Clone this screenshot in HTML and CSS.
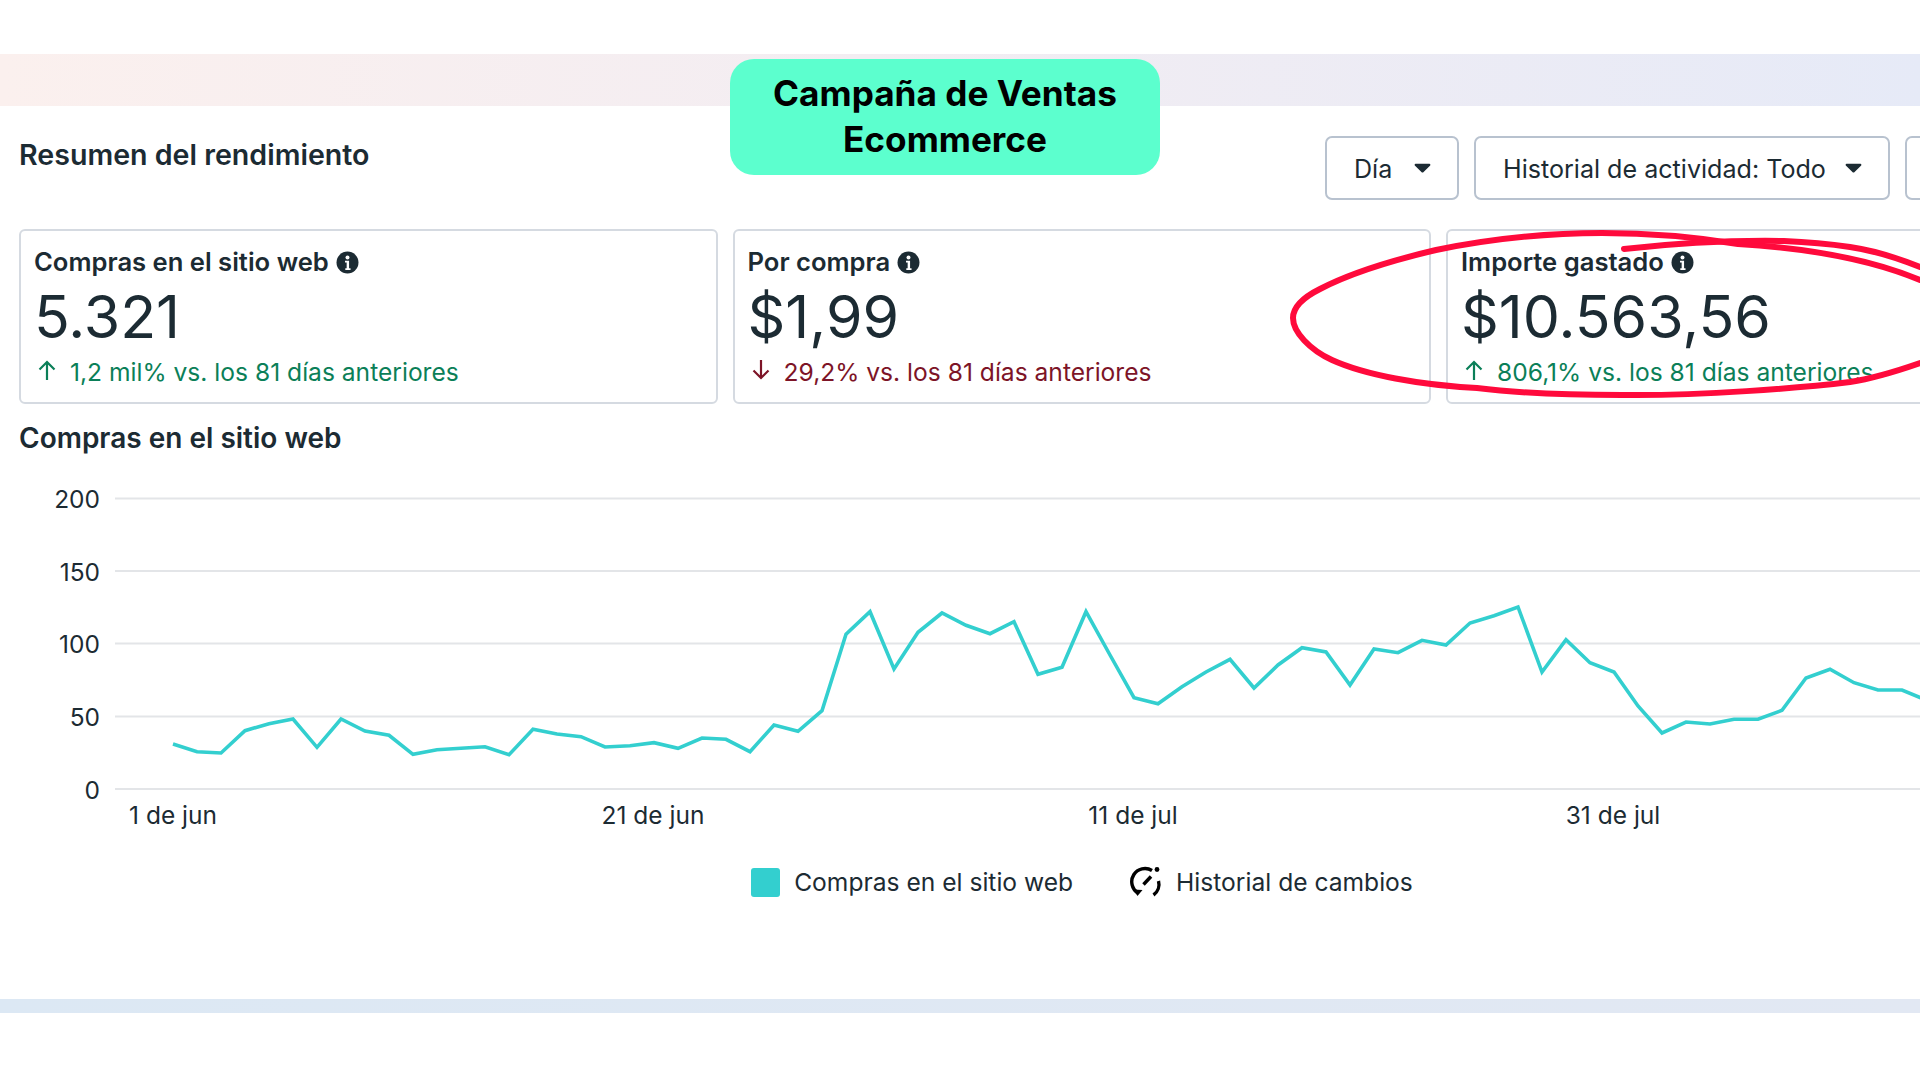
FILE: index.html
```html
<!DOCTYPE html>
<html lang="es">
<head>
  <meta charset="UTF-8">
  <title>Resumen del rendimiento</title>
  <link rel="stylesheet" href="styles.css">
</head>
<body>
  <div class="page">
    <div class="band-top"></div>

    <div class="header">
      <h2 class="page-title">Resumen del rendimiento</h2>
      <div class="filters">
        <button class="filter filter-day">Día <svg class="caret" viewBox="0 0 17 10"><path d="M1.5 0.8h14a1 1 0 0 1 .7 1.6l-6.6 6.6a1.5 1.5 0 0 1-2.2 0L.8 2.4A1 1 0 0 1 1.5.8z"/></svg></button>
        <button class="filter filter-history">Historial de actividad: Todo <svg class="caret" viewBox="0 0 17 10"><path d="M1.5 0.8h14a1 1 0 0 1 .7 1.6l-6.6 6.6a1.5 1.5 0 0 1-2.2 0L.8 2.4A1 1 0 0 1 1.5.8z"/></svg></button>
        <button class="filter filter-cut"></button>
      </div>
    </div>

    <div class="cards">
      <div class="card">
        <div class="card-label">Compras en el sitio web
          <svg class="info" viewBox="0 0 22 22"><circle cx="11" cy="11" r="10.5"/><circle class="info-mark" cx="11" cy="6.2" r="1.9"/><path class="info-mark" d="M8.6 9.3h3.9v7.2h1.4v1.6H8.9v-1.6h1.3v-5.6H8.6z"/></svg>
        </div>
        <div class="card-value">5.321</div>
        <div class="card-delta up">
          <svg class="arrow" viewBox="0 0 18 20"><path d="M9 20V2M1.5 9.5 9 2l7.5 7.5"/></svg>
          1,2 mil% vs. los 81 días anteriores
        </div>
      </div>
      <div class="card">
        <div class="card-label">Por compra
          <svg class="info" viewBox="0 0 22 22"><circle cx="11" cy="11" r="10.5"/><circle class="info-mark" cx="11" cy="6.2" r="1.9"/><path class="info-mark" d="M8.6 9.3h3.9v7.2h1.4v1.6H8.9v-1.6h1.3v-5.6H8.6z"/></svg>
        </div>
        <div class="card-value">$1,99</div>
        <div class="card-delta down">
          <svg class="arrow" viewBox="0 0 18 20"><path d="M9 0v18M1.5 10.5 9 18l7.5-7.5"/></svg>
          29,2% vs. los 81 días anteriores
        </div>
      </div>
      <div class="card">
        <div class="card-label">Importe gastado
          <svg class="info" viewBox="0 0 22 22"><circle cx="11" cy="11" r="10.5"/><circle class="info-mark" cx="11" cy="6.2" r="1.9"/><path class="info-mark" d="M8.6 9.3h3.9v7.2h1.4v1.6H8.9v-1.6h1.3v-5.6H8.6z"/></svg>
        </div>
        <div class="card-value">$10.563,56</div>
        <div class="card-delta up">
          <svg class="arrow" viewBox="0 0 18 20"><path d="M9 20V2M1.5 9.5 9 2l7.5 7.5"/></svg>
          806,1% vs. los 81 días anteriores
        </div>
      </div>
    </div>

    <h3 class="chart-title">Compras en el sitio web</h3>

    <!-- el viewBox usa las coordenadas de la pagina -->
    <svg class="chart" viewBox="0 470 1920 370">
      <g class="grid">
        <line x1="115" y1="498.5" x2="1920" y2="498.5"/>
        <line x1="115" y1="571" x2="1920" y2="571"/>
        <line x1="115" y1="643.5" x2="1920" y2="643.5"/>
        <line x1="115" y1="716.5" x2="1920" y2="716.5"/>
        <line x1="115" y1="789" x2="1920" y2="789"/>
      </g>
      <g class="y-labels">
        <text x="100" y="508">200</text>
        <text x="100" y="581">150</text>
        <text x="100" y="653">100</text>
        <text x="100" y="726">50</text>
        <text x="100" y="799">0</text>
      </g>
      <g class="x-labels">
        <text x="173" y="824">1 de jun</text>
        <text x="653" y="824">21 de jun</text>
        <text x="1133" y="824">11 de jul</text>
        <text x="1613" y="824">31 de jul</text>
      </g>
      <polyline class="series" points="173,744 197,751.7 221,753 245,730.7 269,723.7 293,719 317,747.3 341,719 365,731 389,735.3 413,754.3 437,749.7 461,748.3 485,746.7 509,754.7 533,729.3 557,734 581,736.7 605,747 630,745.7 654,742.7 678,748.3 702,738 726,739.3 750,751.7 774,725 798,731.3 822,710.7 846,634.3 870,611.7 894,669 918,632.3 942,613 966,625.3 990,633.7 1014,621.7 1038,674.3 1062,667.3 1086,611.7 1110,655 1134,697.7 1158,703.7 1182,686.7 1206,672 1230,659.3 1254,688 1278,665 1302,647.7 1326,652 1350,685 1374,649 1398,652.7 1422,640.3 1446,645 1470,623 1494,615.7 1518,607 1542,672 1566,639.7 1590,662.7 1614,672 1638,706 1662,733 1686,722 1710,724 1734,719.3 1758,719.3 1782,710.3 1806,678 1830,669.3 1854,682.7 1878,690 1902,690 1926,700"/>
    </svg>

    <div class="legend">
      <div class="legend-item"><span class="swatch"></span>Compras en el sitio web</div>
      <div class="legend-item">
        <svg class="history-icon" viewBox="5 3 32 34">
          <path d="M27 8.5A13 13 0 0 0 13 31"/>
          <path d="M8.5 27.5 12.5 34l5-6z" class="fill"/>
          <path d="M33.5 19a13 13 0 0 1-5 14"/>
          <path d="M18.5 22.5 26 14.5"/>
          <circle cx="32" cy="7.5" r="2.4" class="fill"/>
        </svg>
        Historial de cambios
      </div>
    </div>

    <div class="band-bottom"></div>

    <div class="badge">Campaña de Ventas<br>Ecommerce</div>

    <svg class="scribble" viewBox="0 0 1920 1080">
      <path d="M1920 280C1860 255 1790 247 1738 244C1690 236 1650 233 1602 233C1540 233 1485 240 1436 250C1385 262 1345 276 1320 289C1302 298 1293 308 1293 318C1293 332 1310 350 1332 360C1365 375 1420 385 1477 388C1525 394 1575 395 1622 395C1700 396 1800 388 1850 382C1875 378 1897 371 1920 363"/>
      <path d="M1624 249C1660 245 1725 240 1784 241C1810 242 1830 244 1850 247C1878 251 1900 259 1920 267"/>
    </svg>
  </div>
</body>
</html>
```

FILE: styles.css
```css
* {
  box-sizing: border-box;
}

body {
  margin: 0;
  background-color: #fff;
  font-family: Inter, "Liberation Sans", sans-serif;
  color: #1c2b33;
}

.page {
  position: relative;
  width: 1920px;
  height: 1080px;
  overflow: hidden;
}

.band-top {
  height: 52px;
  margin-top: 54px;
  background: linear-gradient(90deg, #fbf0ee 0%, #f3edf2 45%, #e6eaf7 100%);
}

.header {
  display: flex;
  justify-content: space-between;
  margin-top: 30px;
  padding-left: 19px;
  height: 64px;
}

.page-title {
  margin: 0;
  font-size: 28.6px;
  font-weight: 600;
  line-height: 38px;
}

.filters {
  display: flex;
  gap: 15px;
  margin-right: -90px;
}

.filter {
  display: flex;
  align-items: center;
  justify-content: space-between;
  height: 64px;
  padding: 2px 26px 0 27px;
  background-color: #fff;
  border: 2px solid #b8c2cf;
  border-radius: 7px;
  font-family: inherit;
  font-size: 25.1px;
  color: #1c2b33;
}

.filter-day {
  width: 134px;
}

.filter-history {
  width: 416px;
}

.filter-cut {
  width: 105px;
}

.caret {
  width: 17px;
  height: 10px;
  margin-top: -2px;
  fill: #1c2b33;
}

.cards {
  display: flex;
  gap: 15px;
  margin-top: 29px;
  padding-left: 19px;
}

.card {
  flex: none;
  width: 698.5px;
  height: 175px;
  padding: 16px 0 0 13px;
  border: 2px solid #d5dae1;
  border-radius: 6px;
}

.card-label {
  display: flex;
  align-items: center;
  gap: 7px;
  font-size: 25.6px;
  font-weight: 600;
  line-height: 30px;
}

.info {
  width: 23px;
  height: 23px;
  fill: #1c2b33;
}

.info .info-mark {
  fill: #fff;
}

.card-value {
  margin-top: 6px;
  font-size: 59px;
  font-weight: 400;
  line-height: 68px;
}

.card-delta {
  display: flex;
  align-items: center;
  gap: 14px;
  margin-top: 6px;
  padding-left: 4px;
  font-size: 24.6px;
  line-height: 30px;
}

.card-delta.up {
  color: #0b7f58;
}

.card-delta.down {
  color: #7d1427;
}

.arrow {
  width: 18px;
  height: 20px;
  margin-top: -4px;
  fill: none;
  stroke: currentColor;
  stroke-width: 2.2;
}

.chart-title {
  margin: 15px 0 0 19px;
  font-size: 28px;
  font-weight: 600;
  line-height: 38px;
}

.chart {
  display: block;
  width: 1920px;
  height: 370px;
  margin-top: 13px;
}

.grid line {
  stroke: #e3e5e8;
  stroke-width: 2;
}

.chart text {
  font-size: 24.5px;
  fill: #1c2b33;
}

.y-labels text {
  text-anchor: end;
}

.x-labels text {
  text-anchor: middle;
}

.series {
  fill: none;
  stroke: #33cfcf;
  stroke-width: 3.6;
  stroke-linejoin: miter;
}

.legend {
  display: flex;
  justify-content: center;
  gap: 57px;
  width: 2164px;
  margin-top: 25px;
}

.legend-item {
  display: flex;
  align-items: center;
  gap: 14px;
  height: 34px;
  font-size: 24.6px;
}

.swatch {
  width: 29px;
  height: 29px;
  border-radius: 3px;
  background-color: #33cfcf;
}

.history-icon {
  width: 32px;
  height: 34px;
  fill: none;
  stroke: #000;
  stroke-width: 3.4;
}

.history-icon .fill {
  fill: #000;
  stroke: none;
}

.band-bottom {
  height: 14px;
  margin-top: 100px;
  background: linear-gradient(90deg, #dce8f4 0%, #e2e8f3 100%);
  box-shadow: 0 -24px 24px -4px #fbfbfb;
}

.badge {
  position: absolute;
  left: 730px;
  top: 59px;
  width: 430px;
  height: 116px;
  padding-top: 11px;
  border-radius: 24px;
  background-color: #5cffce;
  color: #000;
  font-size: 35.2px;
  font-weight: 700;
  line-height: 46px;
  text-align: center;
}

.scribble {
  position: absolute;
  left: 0;
  top: 0;
  width: 1920px;
  height: 1080px;
  fill: none;
  stroke: #ff0a3c;
  stroke-width: 6;
  stroke-linecap: round;
  stroke-linejoin: round;
}
```
